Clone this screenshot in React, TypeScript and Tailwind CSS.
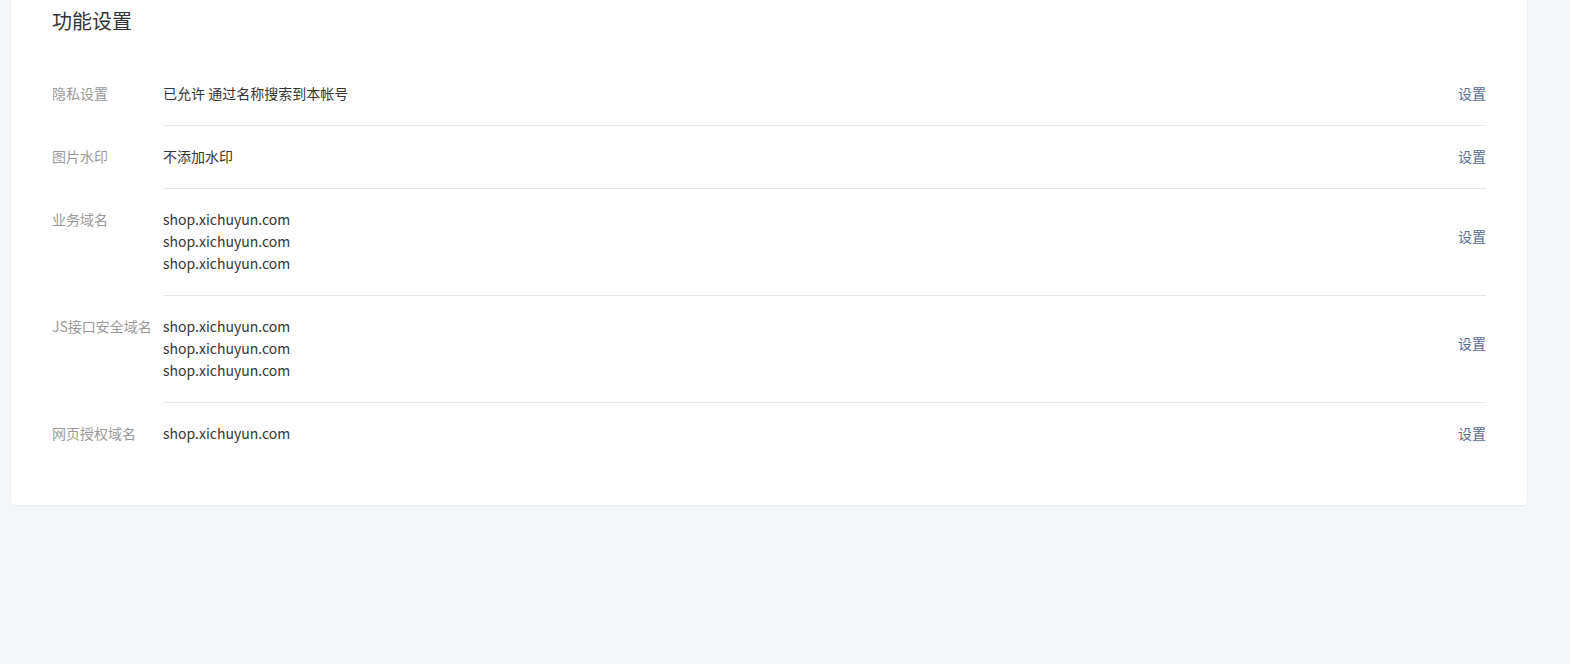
import React from "react";

const font = { fontFamily: '"Microsoft YaHei", "Noto Sans CJK SC", "Noto Sans", sans-serif' };

type Row = { label: string; lines: string[] };

const rows: Row[] = [
  { label: "隐私设置", lines: ["已允许 通过名称搜索到本帐号"] },
  { label: "图片水印", lines: ["不添加水印"] },
  { label: "业务域名", lines: ["shop.xichuyun.com", "shop.xichuyun.com", "shop.xichuyun.com"] },
  { label: "JS接口安全域名", lines: ["shop.xichuyun.com", "shop.xichuyun.com", "shop.xichuyun.com"] },
  { label: "网页授权域名", lines: ["shop.xichuyun.com"] },
];

export default function App() {
  return (
    <div className="min-h-[664px] w-full bg-[#f5f6f8]" style={font}>
      <div className="ml-[11px] w-[1516px] rounded-b-[4px] bg-white pt-[9px] pb-[40px] pl-[41px] pr-[41px] shadow-[0_1px_2px_rgba(0,0,0,0.06)]">
        <h2 className="text-[20px] leading-[24px] text-[#353535] font-normal">功能设置</h2>
        <div className="mt-[30px]">
          {rows.map((r, i) => {
            const last = i === rows.length - 1;
            const multi = r.lines.length > 1;
            return (
              <div key={i} className="flex">
                <div className="w-[111px] shrink-0 pt-[19px] pb-[21px] text-[14px] leading-[22px] text-[#9a9a9a] whitespace-nowrap">
                  {r.label}
                </div>
                <div
                  className={`flex flex-1 items-center justify-between pt-[19px] pb-[21px] ${last ? "" : "border-b border-[#e7e7eb]"}`}
                >
                  <div className="text-[14px] leading-[22px] text-[#353535]">
                    {r.lines.map((l, j) => (
                      <div key={j}>{l}</div>
                    ))}
                  </div>
                  <a className={`text-[14px] leading-[22px] text-[#576b95] ${multi ? "pb-[10px]" : ""}`}>设置</a>
                </div>
              </div>
            );
          })}
        </div>
      </div>
    </div>
  );
}
